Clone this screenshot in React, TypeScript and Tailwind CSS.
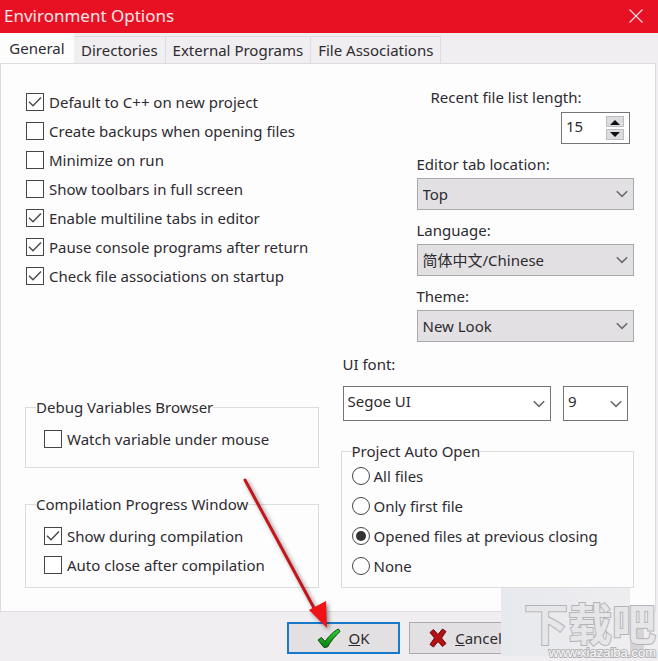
import type { ReactNode } from "react";

const tabs = ["General", "Directories", "External Programs", "File Associations"];

const generalOptions = [
  { label: "Default to C++ on new project", checked: true },
  { label: "Create backups when opening files", checked: false },
  { label: "Minimize on run", checked: false },
  { label: "Show toolbars in full screen", checked: false },
  { label: "Enable multiline tabs in editor", checked: true },
  { label: "Pause console programs after return", checked: true },
  { label: "Check file associations on startup", checked: true },
];

const autoOpen = ["All files", "Only first file", "Opened files at previous closing", "None"];

function Check({ label, checked }: { label: string; checked: boolean }) {
  return (
    <label className="flex h-[29px] items-center gap-[5px] whitespace-nowrap">
      <span className="grid size-[18px] shrink-0">
        <input
          type="checkbox"
          defaultChecked={checked}
          className="peer col-start-1 row-start-1 size-[18px] appearance-none border border-[#454448] bg-white"
        />
        <svg
          viewBox="0 0 18 18"
          className="pointer-events-none col-start-1 row-start-1 hidden size-[18px] peer-checked:block"
          fill="none"
          stroke="#4c4b4e"
          strokeWidth="1.5"
        >
          <path d="M3 8.8 7 12.8 15 4.6" />
        </svg>
      </span>
      {label}
    </label>
  );
}

function Radio({ label, checked }: { label: string; checked: boolean }) {
  return (
    <label className="flex h-[30px] items-center gap-1 whitespace-nowrap">
      <span className="grid size-[18px] shrink-0 place-items-center">
        <input
          type="radio"
          name="auto-open"
          defaultChecked={checked}
          className="peer col-start-1 row-start-1 size-[18px] appearance-none rounded-full border border-[#454448] bg-white"
        />
        <span className="pointer-events-none col-start-1 row-start-1 hidden size-[10px] rounded-full bg-[#333235] peer-checked:block" />
      </span>
      {label}
    </label>
  );
}

function Chevron() {
  return (
    <svg
      viewBox="0 0 12 8"
      className="pointer-events-none col-start-1 row-start-1 mr-[6px] h-2 w-3 justify-self-end"
      fill="none"
      stroke="#6b6a6d"
      strokeWidth="1.6"
    >
      <path d="M0.8 1.2 6 6.4 11.2 1.2" />
    </svg>
  );
}

function Field({ id, label, value }: { id: string; label: string; value: string }) {
  return (
    <div className="flex flex-col gap-1">
      <label htmlFor={id}>{label}</label>
      <div className="grid items-center">
        <select
          id={id}
          className="col-start-1 row-start-1 h-8 w-full appearance-none border border-[#a9a8ab] bg-[#e2e0e3] pl-[5px]"
        >
          <option>{value}</option>
        </select>
        <Chevron />
      </div>
    </div>
  );
}

function Combo({ label, value, className }: { label: string; value: string; className: string }) {
  return (
    <div className={`grid items-center ${className}`}>
      <select
        aria-label={label}
        className="col-start-1 row-start-1 h-[35px] w-full appearance-none border border-[#757477] bg-white pb-[6px] pl-1"
      >
        <option>{value}</option>
      </select>
      <Chevron />
    </div>
  );
}

function Group({ title, className, children }: { title: string; className: string; children: ReactNode }) {
  return (
    <fieldset className={`min-w-0 border border-[#dddbde] ${className}`}>
      <legend className="leading-5">{title}</legend>
      {children}
    </fieldset>
  );
}

export default function App() {
  return (
    <div className="relative flex min-h-screen flex-col overflow-hidden bg-[#f0eef1] font-['Noto_Sans','Noto_Sans_CJK_SC',sans-serif] text-[15px] leading-5 text-[#2d2b30]">
      <header className="flex h-[33px] items-center justify-between bg-[#e81123] pr-[15px] pb-px pl-1 text-[#ffe4e6]">
        <h1 className="text-[17px]">Environment Options</h1>
        <button aria-label="Close">
          <svg viewBox="0 0 14 14" className="size-[14px]" stroke="currentColor" strokeWidth="1.1">
            <path d="M0.5 0.5 13.5 13.5M13.5 0.5 0.5 13.5" />
          </svg>
        </button>
      </header>

      <nav role="tablist" className="flex h-[30px] items-end">
        {tabs.map((tab, i) =>
          i === 0 ? (
            <button key={tab} role="tab" aria-selected className="h-[30px] w-[74px] bg-[#fefdfe]">
              {tab}
            </button>
          ) : (
            <button
              key={tab}
              role="tab"
              aria-selected={false}
              className="h-[27px] border-t border-r border-[#dddbde] px-[7px] whitespace-nowrap"
            >
              {tab}
            </button>
          ),
        )}
      </nav>

      <main className="mr-[2px] flex gap-[22px] border border-[#dddbde] bg-[#fefdfe] pt-[23px] pr-[21px] pb-[23px] pl-6">
        <section className="flex flex-1 basis-0 flex-col justify-between">
          <div className="pl-px">
            {generalOptions.map((option) => (
              <Check key={option.label} {...option} />
            ))}
          </div>
          <div className="flex flex-col gap-[26px]">
            <Group title="Debug Variables Browser" className="px-[10px] pb-[14px]">
              <div className="px-2 pt-[7px]">
                <Check label="Watch variable under mouse" checked={false} />
              </div>
            </Group>
            <Group title="Compilation Progress Window" className="px-[10px] pb-2">
              <div className="px-2 pt-[7px]">
                <Check label="Show during compilation" checked />
                <Check label="Auto close after compilation" checked={false} />
              </div>
            </Group>
          </div>
        </section>

        <section className="flex flex-1 basis-0 flex-col">
          <div className="flex flex-col gap-[10px] pl-[76px]">
            <div className="flex flex-col gap-[5px] pl-[14px]">
              <label htmlFor="recent">Recent file list length:</label>
              <div className="mr-1 flex h-8 w-[69px] items-center justify-between self-end border border-[#757477] bg-white pr-[5px] pl-1">
                <input id="recent" defaultValue="15" className="w-8 pb-1 outline-none" />
                <span className="flex flex-col gap-[2px]">
                  <button
                    aria-label="Increase"
                    className="flex h-[11px] w-[18px] items-center justify-center border border-[#bdbcbf] bg-[#dcdbdd]"
                  >
                    <svg viewBox="0 0 12 6" className="h-[6px] w-3" fill="#111">
                      <path d="M1 6 6 1 11 6Z" />
                    </svg>
                  </button>
                  <button
                    aria-label="Decrease"
                    className="flex h-[11px] w-[18px] items-center justify-center border border-[#bdbcbf] bg-[#dcdbdd]"
                  >
                    <svg viewBox="0 0 12 6" className="h-[6px] w-3" fill="#111">
                      <path d="M1 0 6 5 11 0Z" />
                    </svg>
                  </button>
                </span>
              </div>
            </div>
            <Field id="tab-location" label="Editor tab location:" value="Top" />
            <Field id="language" label="Language:" value="简体中文/Chinese" />
            <Field id="theme" label="Theme:" value="New Look" />
          </div>

          <div className="mt-3 flex flex-col gap-3 pr-[6px] pl-[2px]">
            <p>UI font:</p>
            <div className="flex gap-3">
              <Combo label="Font name" value="Segoe UI" className="flex-1" />
              <Combo label="Font size" value="9" className="w-[65px]" />
            </div>
          </div>

          <Group title="Project Auto Open" className="mt-5 px-[10px] pb-[6px]">
            {autoOpen.map((label, i) => (
              <Radio key={label} label={label} checked={i === 2} />
            ))}
          </Group>
        </section>
      </main>

      <footer className="mr-[14px] flex justify-end gap-[9px] pt-[10px] pb-[7px]">
        <button className="flex h-8 w-[113px] items-center justify-center gap-[7px] border-2 border-[#1979ca] bg-[#e2e0e3]">
          <svg viewBox="0 0 24 20" className="h-5 w-6">
            <defs>
              <linearGradient id="tick" x1="0" y1="0" x2="0" y2="1">
                <stop offset="0" stopColor="#2fd42a" />
                <stop offset="1" stopColor="#078012" />
              </linearGradient>
            </defs>
            <path
              d="M1 12 4.5 9.5 8 13.5C12 8 17 3 21.5 1L23 3.5C18 8 14 13 10.5 19L7 19.5Z"
              fill="url(#tick)"
              stroke="#0b4a12"
              strokeWidth="1"
              strokeLinejoin="round"
            />
          </svg>
          <span>
            <u>O</u>K
          </span>
        </button>
        <button className="flex h-8 w-[113px] items-center justify-center gap-2 border border-[#a9a8ab] bg-[#e2e0e3]">
          <svg viewBox="0 0 18 20" className="h-5 w-[18px]">
            <path
              d="M1 4.5 4.5 1.5 9 6.5 13.5 1 17 3.5 12.5 10 17 15.5 13.5 18.5 9 13.5 4.5 19 1 16.5 5.5 10Z"
              fill="#b80f12"
              stroke="#650b0f"
              strokeLinejoin="round"
            />
          </svg>
          <span>
            <u>C</u>ancel
          </span>
        </button>
        <button aria-label="Help" className="h-8 w-[113px] bg-[#d6d4d7]" />
      </footer>

      {/* pointer to the OK button */}
      <svg
        viewBox="0 0 100 156"
        className="pointer-events-none absolute top-[476px] left-[238px] h-[156px] w-[100px] drop-shadow-[2px_2px_2px_rgba(0,0,0,0.45)]"
      >
        <path d="M7 4 76 132" stroke="#c4161a" strokeWidth="3" strokeLinecap="round" />
        <path d="M71 134 88 125 89 152Z" fill="#f01216" />
      </svg>

      <div className="pointer-events-none absolute right-[28px] bottom-[5px] h-[68px] w-[129px] bg-linear-to-r from-[#e6e9ed] to-[#efedf0]" />
      <div className="pointer-events-none absolute right-[2px] bottom-0 flex flex-col items-end whitespace-nowrap">
        <span className="text-[44px] leading-[42px] font-bold text-[#e6e5e8] [-webkit-text-stroke:2px_#b4b3b7] [paint-order:stroke_fill]">
          下载吧
        </span>
        <span className="font-['Liberation_Sans',sans-serif] text-[13px] leading-4 text-[#fafafa] [-webkit-text-stroke:2px_#b4b4b7] [paint-order:stroke_fill]">
          www.xiazaiba.com
        </span>
      </div>
    </div>
  );
}
